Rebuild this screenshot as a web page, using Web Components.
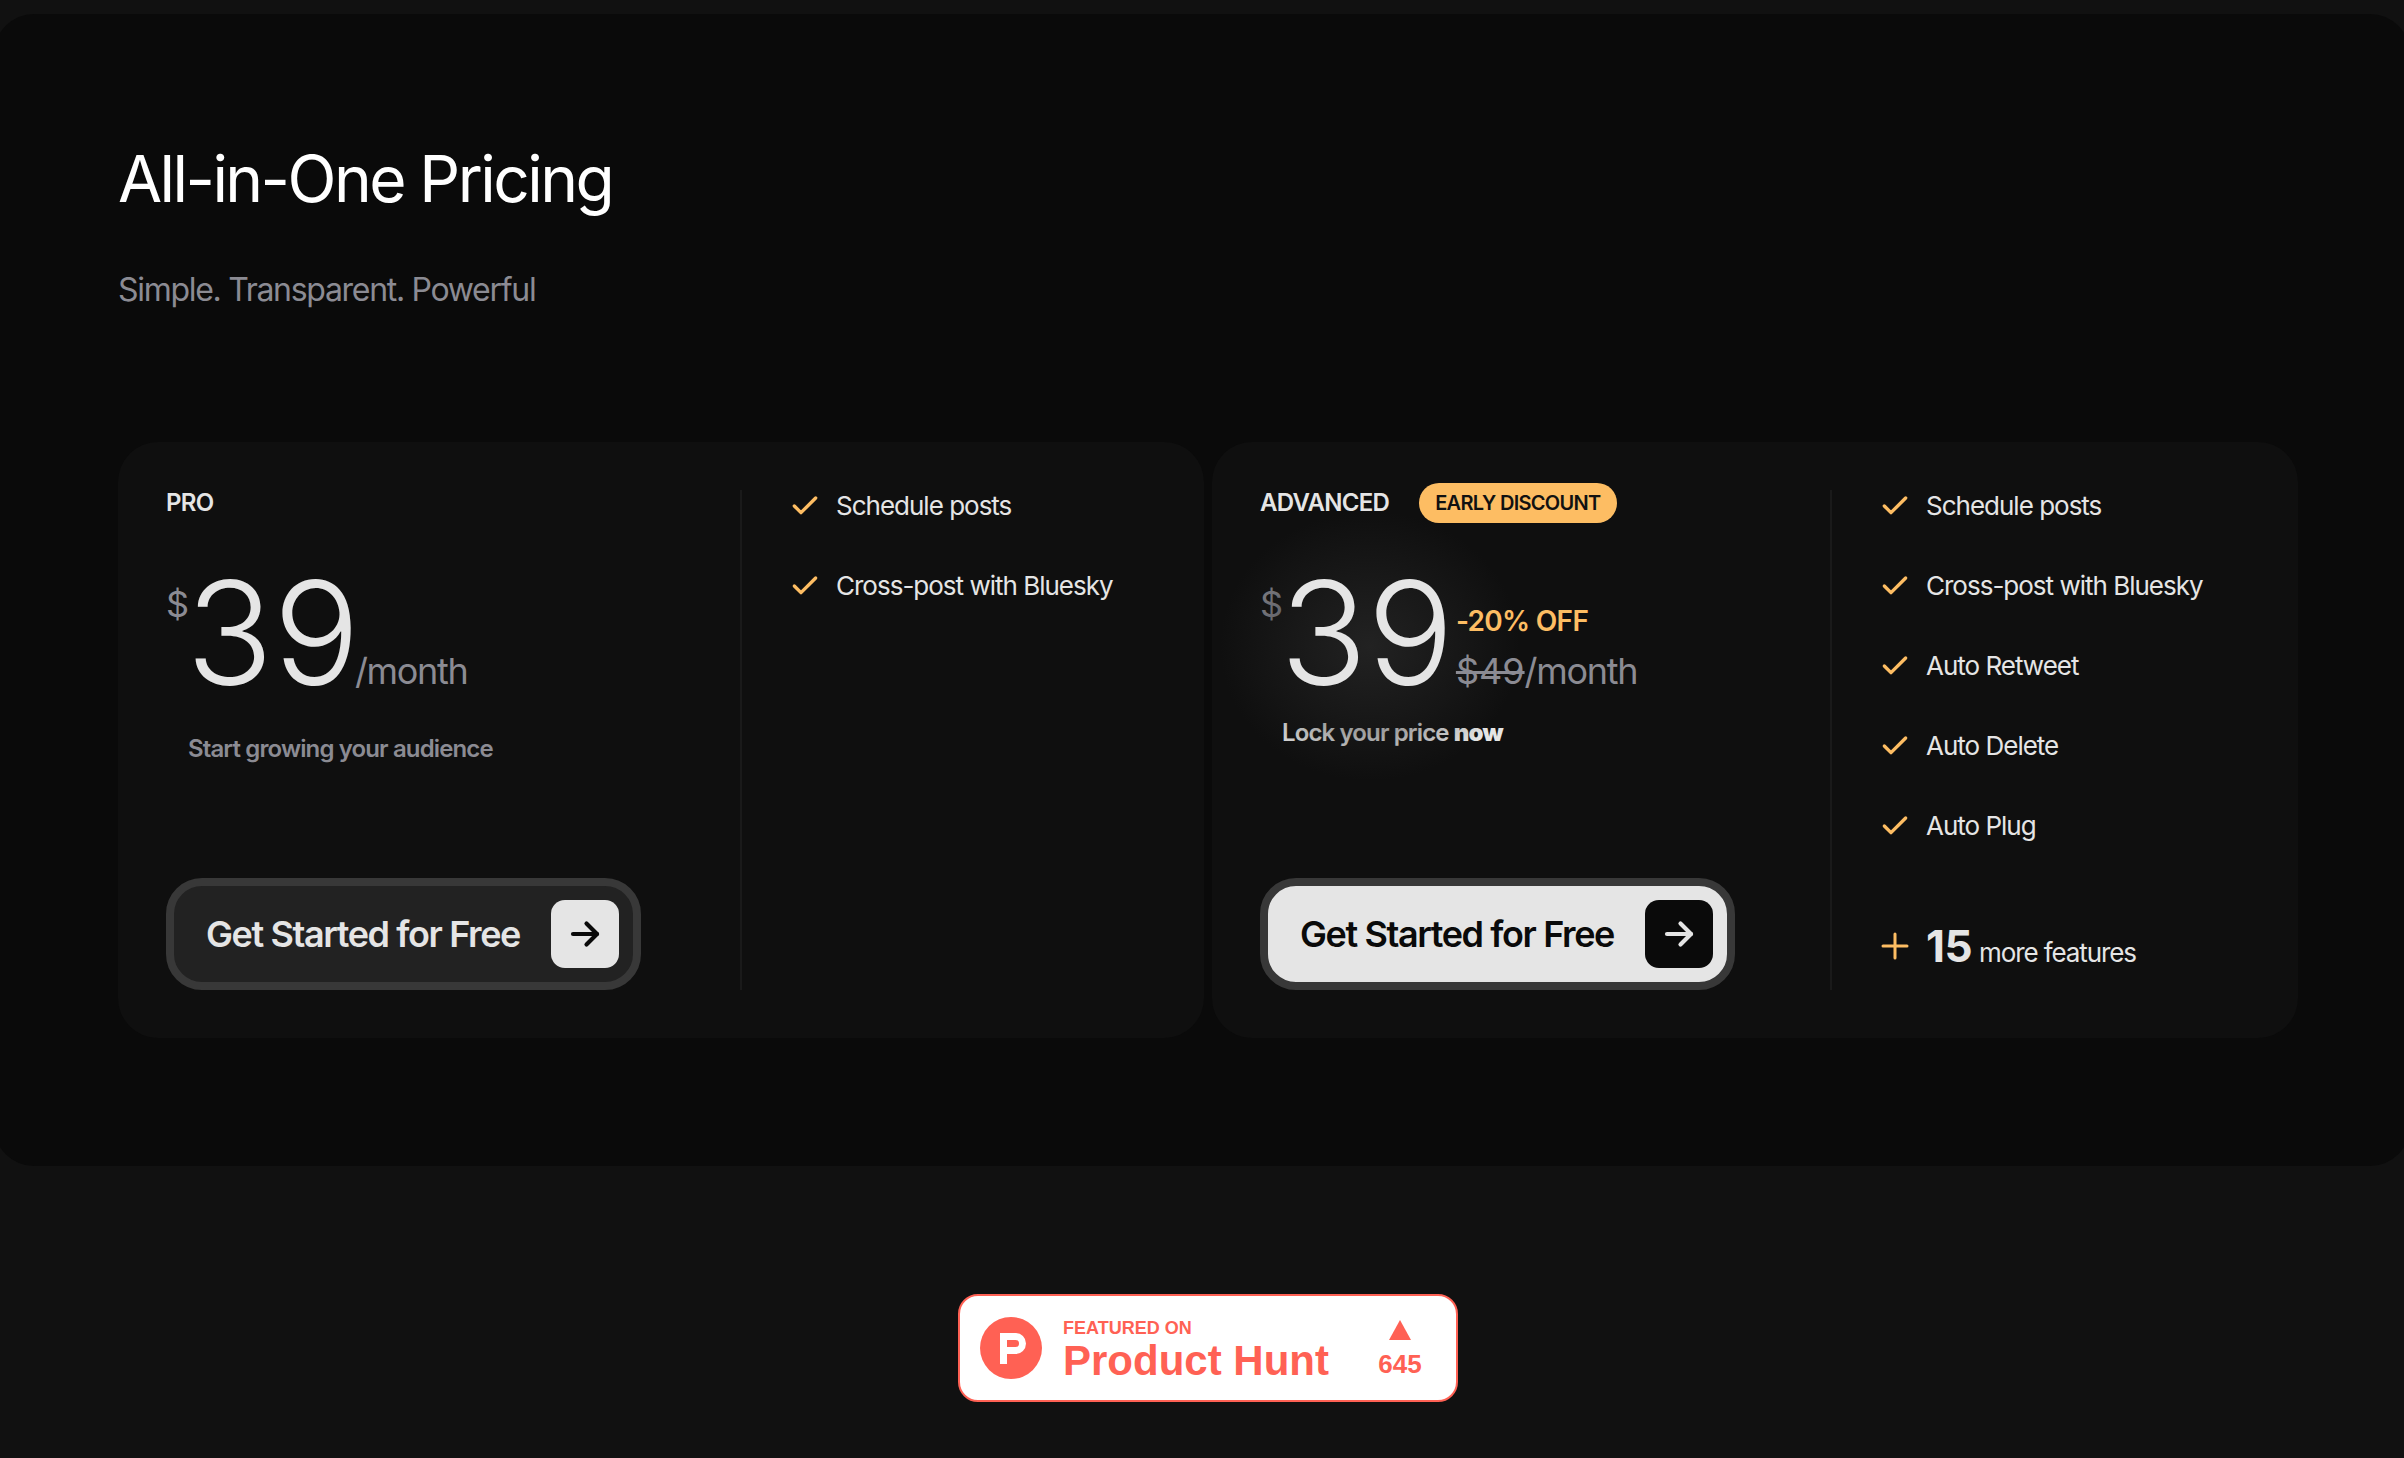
<!DOCTYPE html>
<html lang="en">
<head>
<meta charset="utf-8">
<title>All-in-One Pricing</title>
<style>
  html, body { margin: 0; height: 100%; background: #111111; overflow: hidden; }
  body { font-family: 'Inter', 'Liberation Sans', sans-serif; color: #e5e5e5; }
</style>
</head>
<body>

<pricing-panel heading="All-in-One Pricing" sub="Simple. Transparent. Powerful">
  <price-card name="PRO" divider="624">
    <price-tag slot="price" amount="39"></price-tag>
    <span slot="note">Start growing your audience</span>
    <cta-button slot="cta">Get Started for Free</cta-button>
    <feature-item>Schedule posts</feature-item>
    <feature-item>Cross-post with Bluesky</feature-item>
  </price-card>
  <price-card name="ADVANCED" badge="EARLY DISCOUNT" divider="620" featured>
    <price-tag slot="price" amount="39" off="-20% OFF" old="$49" glow></price-tag>
    <span slot="note">Lock your price <b>now</b></span>
    <cta-button slot="cta" light>Get Started for Free</cta-button>
    <feature-item>Schedule posts</feature-item>
    <feature-item>Cross-post with Bluesky</feature-item>
    <feature-item>Auto Retweet</feature-item>
    <feature-item>Auto Delete</feature-item>
    <feature-item>Auto Plug</feature-item>
    <more-features slot="more" count="15">more features</more-features>
  </price-card>
</pricing-panel>

<ph-badge votes="645"></ph-badge>

<script>
// Dark panel with the heading, cards go in the slot
class PricingPanel extends HTMLElement {
  constructor() {
    super();
    this.attachShadow({ mode: 'open' });
    this.shadowRoot.innerHTML = `
      <style>
        :host {
          display: block;
          margin: 14px -6px 0;
          padding: 133px 112px 128px 124px;
          background: #0a0a0a;
          border-radius: 40px;
        }
        h1 {
          margin: 0;
          font: 400 64px/1 'Inter', sans-serif;
          letter-spacing: -2.55px;
          color: #ffffff;
        }
        p {
          margin: 63px 0 136px;
          font: 400 32px/1 'Inter', sans-serif;
          letter-spacing: -1.3px;
          color: #8b8b93;
        }
        .cards { display: flex; gap: 8px; }
      </style>
      <h1></h1>
      <p></p>
      <div class="cards"><slot></slot></div>
    `;
    this.shadowRoot.querySelector('h1').textContent = this.getAttribute('heading');
    this.shadowRoot.querySelector('p').textContent = this.getAttribute('sub');
  }
}

// One plan: left side has name, price, note and button, right side the features
class PriceCard extends HTMLElement {
  constructor() {
    super();
    this.attachShadow({ mode: 'open' });
    const featured = this.hasAttribute('featured');
    this.shadowRoot.innerHTML = `
      <style>
        :host {
          display: flex;
          box-sizing: border-box;
          width: 1086px;
          height: 596px;
          padding: 48px;
          background: #0f0f0f;
          border-radius: 40px;
        }
        .left {
          display: flex;
          flex-direction: column;
          box-sizing: border-box;
          width: ${this.getAttribute('divider') - 48}px;
          border-right: 2px solid #1a1a1a;
        }
        .name {
          display: flex;
          align-items: center;
          gap: 30px;
          height: 26px;
          font: 600 24px/26px 'Inter', sans-serif;
          letter-spacing: -0.7px;
          color: #e5e5e5;
        }
        .badge {
          flex: none;
          padding: 0 16px;
          height: 40px;
          line-height: 40px;
          border-radius: 20px;
          background: #fdbd63;
          color: #111111;
          font-size: 20px;
        }
        .note {
          font: 600 24px/30px 'Inter', sans-serif;
          letter-spacing: -0.87px;
          margin: ${featured ? '13px 0 0 22px' : '29px 0 0 22px'};
          color: ${featured ? '#e5e5e5' : '#8b8b93'};
        }
        .cta { margin-top: auto; }
        .right {
          flex: 1;
          display: flex;
          flex-direction: column;
          gap: 52px;
          padding: 2px 0 0 47px;
        }
        .more { margin-top: auto; }
      </style>
      <div class="left">
        <div class="name"></div>
        <slot name="price"></slot>
        <div class="note"><slot name="note"></slot></div>
        <div class="cta"><slot name="cta"></slot></div>
      </div>
      <div class="right">
        <slot></slot>
        <div class="more"><slot name="more"></slot></div>
      </div>
    `;
    const name = this.shadowRoot.querySelector('.name');
    name.innerHTML = `<span>${this.getAttribute('name')}</span>`;
    if (this.hasAttribute('badge')) {
      const badge = document.createElement('span');
      badge.className = 'badge';
      badge.textContent = this.getAttribute('badge');
      name.appendChild(badge);
    }
  }
}

// Big price, with the discount stack when "off" is given
class PriceTag extends HTMLElement {
  constructor() {
    super();
    this.attachShadow({ mode: 'open' });
    const off = this.getAttribute('off');
    const old = this.getAttribute('old');
    this.shadowRoot.innerHTML = `
      <style>
        :host {
          display: flex;
          align-items: flex-start;
          position: relative;
          margin-top: 45px;
          height: 144px;
        }
        .cur {
          width: 20px;
          margin-top: 25px;
          font: 400 36px/1 'Inter', sans-serif;
          color: #8b8b93;
        }
        .amount {
          position: relative;
          font: 350 144px/1 'Inter', sans-serif;
          letter-spacing: 0;
          color: #e5e5e5;
        }
        .glow::before {
          content: '';
          position: absolute;
          left: -60px;
          top: -50px;
          width: 300px;
          height: 270px;
          background: radial-gradient(closest-side, #222222, rgba(34,34,34,0));
          z-index: -1;
        }
        .wrap { position: relative; z-index: 0; display: flex; align-items: flex-start; }
        .stack {
          display: flex;
          flex-direction: column;
          margin-left: 2px;
          margin-top: 40px;
        }
        .off {
          height: 40px;
          font: 600 28px/40px 'Inter', sans-serif;
          letter-spacing: -0.7px;
          color: #fdbd63;
        }
        .per {
          font: 400 36px/1 'Inter', sans-serif;
          letter-spacing: -1.3px;
          color: #8b8b93;
          margin-top: ${off ? '12px' : '0'};
        }
        .plain { margin-top: 92px; margin-left: -5px; }
        s { text-decoration-thickness: 3px; letter-spacing: 0; }
      </style>
      <div class="cur">$</div>
      <div class="wrap">
        <div class="amount ${this.hasAttribute('glow') ? 'glow' : ''}">${this.getAttribute('amount')}</div>
        ${off
          ? `<div class="stack"><div class="off">${off}</div><div class="per"><s>${old}</s>/month</div></div>`
          : `<div class="per plain">/month</div>`}
      </div>
    `;
  }
}

// Ringed button with the arrow square on the right
class CtaButton extends HTMLElement {
  constructor() {
    super();
    this.attachShadow({ mode: 'open' });
    const light = this.hasAttribute('light');
    this.shadowRoot.innerHTML = `
      <style>
        :host {
          display: inline-flex;
          align-items: center;
          justify-content: space-between;
          box-sizing: border-box;
          width: 475px;
          height: 112px;
          padding: 0 14px 0 32px;
          border: 8px solid #383838;
          border-radius: 36px;
          background: ${light ? '#e5e5e5' : '#222222'};
          color: ${light ? '#0a0a0a' : '#e5e5e5'};
          font: 600 36px/1 'Inter', sans-serif;
          letter-spacing: -1.4px;
        }
        .arrow {
          display: flex;
          align-items: center;
          justify-content: center;
          width: 68px;
          height: 68px;
          border-radius: 14px;
          background: ${light ? '#0a0a0a' : '#e5e5e5'};
          color: ${light ? '#e5e5e5' : '#0a0a0a'};
        }
      </style>
      <slot></slot>
      <span class="arrow">
        <svg width="36" height="36" viewBox="0 0 24 24" fill="none" stroke="currentColor" stroke-width="2.8" stroke-linecap="round" stroke-linejoin="round">
          <path d="M4 12h16"/><path d="M13 5l7 7-7 7"/>
        </svg>
      </span>
    `;
  }
}

class FeatureItem extends HTMLElement {
  constructor() {
    super();
    this.attachShadow({ mode: 'open' });
    this.shadowRoot.innerHTML = `
      <style>
        :host {
          display: flex;
          align-items: center;
          gap: 15px;
          height: 28px;
          font: 400 26px/28px 'Inter', sans-serif;
          letter-spacing: -1px;
          color: #e5e5e5;
        }
        svg { flex: none; }
      </style>
      <svg width="32" height="32" viewBox="0 0 24 24" fill="none" stroke="#fdbd63" stroke-width="2.5" stroke-linecap="round" stroke-linejoin="round">
        <polyline points="20 6 9 17 4 12"></polyline>
      </svg>
      <slot></slot>
    `;
  }
}

class MoreFeatures extends HTMLElement {
  constructor() {
    super();
    this.attachShadow({ mode: 'open' });
    this.shadowRoot.innerHTML = `
      <style>
        :host {
          display: flex;
          align-items: center;
          gap: 15px;
          height: 56px;
          margin-bottom: 16px;
          font: 400 26px/1 'Inter', sans-serif;
          letter-spacing: -1.1px;
          color: #e5e5e5;
        }
        svg { flex: none; }
        .txt { display: flex; align-items: baseline; gap: 7px; }
        b { font: 700 44px/1 'Inter', sans-serif; letter-spacing: -0.5px; }
      </style>
      <svg width="32" height="32" viewBox="0 0 32 32" fill="none" stroke="#fdbd63" stroke-width="3" stroke-linecap="round">
        <path d="M4 16h24"/><path d="M16 4v24"/>
      </svg>
      <span class="txt"><b>${this.getAttribute('count')}</b><slot></slot></span>
    `;
  }
}

// Product Hunt "featured on" badge
class PhBadge extends HTMLElement {
  constructor() {
    super();
    this.attachShadow({ mode: 'open' });
    this.shadowRoot.innerHTML = `
      <style>
        :host {
          display: flex;
          align-items: center;
          box-sizing: border-box;
          width: 500px;
          height: 108px;
          margin: 128px 0 0 958px;
          padding: 0 34px 0 20px;
          background: #ffffff;
          border: 2px solid #ff6154;
          border-radius: 20px;
          color: #ff6154;
          font-family: 'Liberation Sans', Arial, sans-serif;
          font-weight: 700;
        }
        svg { flex: none; }
        .words { margin-left: 21px; flex: 1; padding-top: 3px; }
        .small { font-size: 18px; line-height: 20px; margin-bottom: 2px; }
        .big { font-size: 42px; line-height: 42px; }
        .votes { display: flex; flex-direction: column; align-items: center; gap: 11px; width: 44px; }
        .count { font-size: 26px; line-height: 26px; }
        .tri { width: 0; height: 0; border-left: 11px solid transparent; border-right: 11px solid transparent; border-bottom: 20px solid #ff6154; }
      </style>
      <svg width="62" height="62" viewBox="0 0 62 62">
        <circle cx="31" cy="31" r="31" fill="#ff6154"/>
        <path d="M20 16h15.500a10.500 10.500 0 0 1 0 21H27v10h-7zM27 23v7h8.500a3.500 3.500 0 0 0 0-7z" fill="#fff" fill-rule="evenodd"/>
      </svg>
      <div class="words">
        <div class="small">FEATURED ON</div>
        <div class="big">Product Hunt</div>
      </div>
      <div class="votes">
        <div class="tri"></div>
        <div class="count">${this.getAttribute('votes')}</div>
      </div>
    `;
  }
}

customElements.define('pricing-panel', PricingPanel);
customElements.define('price-card', PriceCard);
customElements.define('price-tag', PriceTag);
customElements.define('cta-button', CtaButton);
customElements.define('feature-item', FeatureItem);
customElements.define('more-features', MoreFeatures);
customElements.define('ph-badge', PhBadge);
</script>
</body>
</html>
